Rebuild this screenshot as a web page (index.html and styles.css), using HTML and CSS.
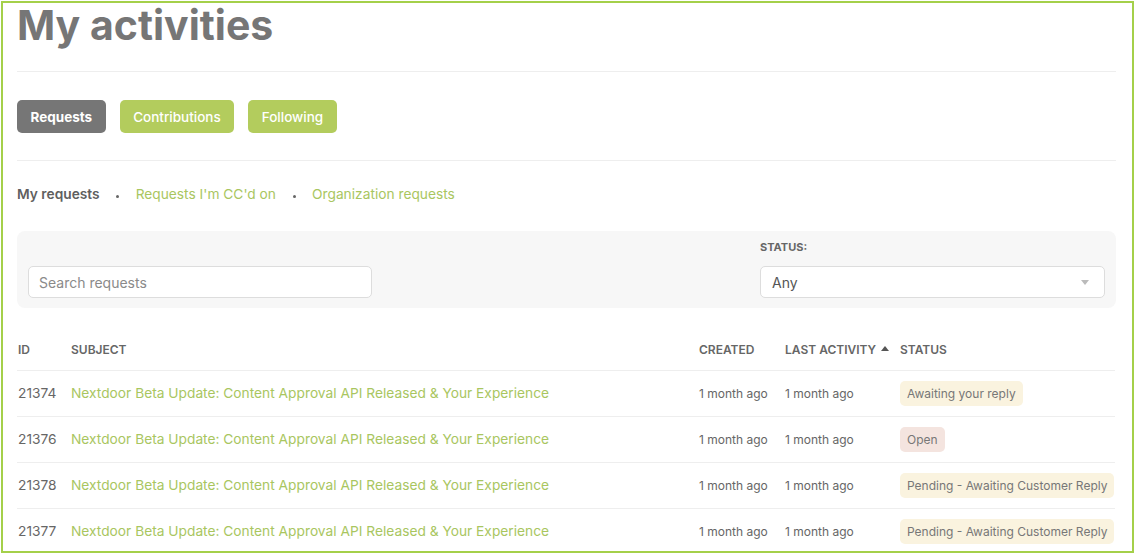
FILE: index.html
```html
<!DOCTYPE html>
<html lang="en">
  <head>
    <meta charset="UTF-8" />
    <meta name="viewport" content="width=device-width, initial-scale=1.0" />
    <title>My activities</title>
    <link rel="stylesheet" href="styles.css">
  </head>
  <body>
    <div class="frame">
      <div class="page">
        <h1>My activities</h1>
        <hr class="divider" />

        <nav class="tabs">
          <a class="tab tab-active" href="#">Requests</a>
          <a class="tab" href="#">Contributions</a>
          <a class="tab" href="#">Following</a>
        </nav>
        <hr class="divider" />

        <nav class="subnav">
          <span class="subnav-current">My requests</span>
          <span class="dot"></span>
          <a href="#">Requests I'm CC'd on</a>
          <span class="dot"></span>
          <a href="#">Organization requests</a>
        </nav>

        <div class="filters">
          <div class="filter-search">
            <input type="text" placeholder="Search requests" />
          </div>
          <div class="filter-status">
            <label>Status:</label>
            <div class="select">
              <span>Any</span>
              <span class="caret"></span>
            </div>
          </div>
        </div>

        <table class="requests">
          <colgroup>
            <col class="c-id" />
            <col class="c-subject" />
            <col class="c-created" />
            <col class="c-activity" />
            <col />
          </colgroup>
          <thead>
            <tr>
              <th>ID</th>
              <th>Subject</th>
              <th>Created</th>
              <th class="sorted">Last activity <span class="sort-up"></span></th>
              <th>Status</th>
            </tr>
          </thead>
          <tbody>
            <tr>
              <td>21374</td>
              <td><a href="#">Nextdoor Beta Update: Content Approval API Released &amp; Your Experience</a></td>
              <td class="time">1 month ago</td>
              <td class="time">1 month ago</td>
              <td><span class="badge badge-reply">Awaiting your reply</span></td>
            </tr>
            <tr>
              <td>21376</td>
              <td><a href="#">Nextdoor Beta Update: Content Approval API Released &amp; Your Experience</a></td>
              <td class="time">1 month ago</td>
              <td class="time">1 month ago</td>
              <td><span class="badge badge-open">Open</span></td>
            </tr>
            <tr>
              <td>21378</td>
              <td><a href="#">Nextdoor Beta Update: Content Approval API Released &amp; Your Experience</a></td>
              <td class="time">1 month ago</td>
              <td class="time">1 month ago</td>
              <td><span class="badge badge-reply">Pending - Awaiting Customer Reply</span></td>
            </tr>
            <tr>
              <td>21377</td>
              <td><a href="#">Nextdoor Beta Update: Content Approval API Released &amp; Your Experience</a></td>
              <td class="time">1 month ago</td>
              <td class="time">1 month ago</td>
              <td><span class="badge badge-reply">Pending - Awaiting Customer Reply</span></td>
            </tr>
          </tbody>
        </table>
      </div>
    </div>
  </body>
</html>
```

FILE: styles.css
```css
* {
  margin: 0;
  padding: 0;
  box-sizing: border-box;
  font-family: Inter, "Noto Sans", sans-serif;
}

body {
  background-color: #ffffff;
  overflow: hidden;
}

.frame {
  margin: 1px 0 0 1px;
  width: 1133px;
  height: 552px;
  border: 2px solid #a4d04a;
  overflow: hidden;
}

.page {
  padding: 0 16px 0 14px;
}

h1 {
  margin-top: -2px;
  font-size: 41px;
  line-height: 48px;
  font-weight: 700;
  color: #767676;
}

.divider {
  border: none;
  border-top: 1px solid #eeeeee;
  margin-top: 22px;
}

.tabs {
  display: flex;
  gap: 14px;
  margin-top: 28px;
  margin-bottom: 27px;
}

.tab {
  display: inline-flex;
  align-items: center;
  height: 33px;
  padding: 0 13.5px;
  border-radius: 5px;
  background-color: #b3cc5d;
  color: #ffffff;
  font-size: 13.5px;
  font-weight: 500;
  text-decoration: none;
}

.tab-active {
  background-color: #767676;
  font-weight: 700;
}

.subnav {
  display: flex;
  align-items: center;
  gap: 16.5px;
  margin-top: 23px;
  line-height: 20px;
  font-size: 13.75px;
}

.subnav-current {
  color: #5f5f5f;
  font-weight: 600;
}

.subnav a {
  color: #a9c65f;
  text-decoration: none;
}

.dot {
  width: 3px;
  height: 3px;
  border-radius: 50%;
  background-color: #666666;
  margin-top: 5px;
}

.filters {
  display: flex;
  justify-content: space-between;
  align-items: flex-end;
  margin-top: 27px;
  padding: 9px 11px 10px;
  background-color: #f7f7f7;
  border-radius: 8px;
}

.filter-search input {
  width: 344px;
  height: 32px;
  padding: 0 10px;
  border: 1px solid #dddddd;
  border-radius: 5px;
  font-size: 14px;
  color: #555555;
  background-color: #ffffff;
}

.filter-search input::placeholder {
  color: #8a8a8a;
}

.filter-status label {
  display: block;
  font-size: 11px;
  font-weight: 700;
  text-transform: uppercase;
  color: #666666;
  line-height: 14px;
  margin-bottom: 12px;
}

.select {
  display: flex;
  justify-content: space-between;
  align-items: center;
  width: 345px;
  height: 32px;
  padding: 0 11px;
  border: 1px solid #dddddd;
  border-radius: 5px;
  background-color: #ffffff;
  font-size: 14px;
  color: #555555;
}

.caret {
  width: 0;
  height: 0;
  border-left: 4px solid transparent;
  border-right: 4px solid transparent;
  border-top: 5px solid #bbbbbb;
  margin-right: 4px;
}

.requests {
  width: 1098px;
  table-layout: fixed;
  border-collapse: collapse;
  margin-top: 21px;
}

.c-id {
  width: 54px;
}

.c-subject {
  width: 628px;
}

.c-created {
  width: 86px;
}

.c-activity {
  width: 115px;
}

th,
td {
  padding: 0;
  text-align: left;
  border-bottom: 1px solid #eeeeee;
  white-space: nowrap;
}

th {
  height: 41px;
  font-size: 12px;
  font-weight: 600;
  text-transform: uppercase;
  color: #666666;
}

th:first-child,
td:first-child {
  padding-left: 1px;
}

.sort-up {
  display: inline-block;
  width: 0;
  height: 0;
  border-left: 4px solid transparent;
  border-right: 4px solid transparent;
  border-bottom: 5px solid #555555;
  margin-left: 2px;
  vertical-align: 3px;
}

td {
  height: 46px;
  font-size: 13.75px;
  color: #666666;
}

td a {
  color: #a9c65f;
  text-decoration: none;
}

.time {
  font-size: 12px;
}

.badge {
  display: inline-block;
  height: 25px;
  line-height: 25px;
  padding: 0 7px;
  border-radius: 5px;
  font-size: 12px;
  color: #777777;
}

.badge-reply {
  background-color: #faf3df;
}

.badge-open {
  background-color: #f4e4df;
}
```
